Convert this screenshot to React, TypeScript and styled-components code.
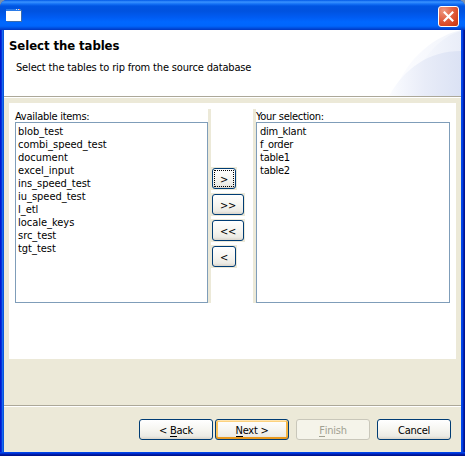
import React from "react";
import styled, { createGlobalStyle, css } from "styled-components";

const GlobalStyle = createGlobalStyle`
  * { box-sizing: border-box; }
  body { margin: 0; background: #7d90a8; overflow: hidden; }
`;

const Window = styled.div`
  width: 465px;
  height: 456px;
  display: flex;
  flex-direction: column;
  border-radius: 7px 7px 0 0;
  overflow: hidden;
  background: #0046e0;
  font: 11px/13px "DejaVu Sans Condensed", "DejaVu Sans", sans-serif;
  font-stretch: condensed;
  letter-spacing: -0.27px;
  color: #000;
  white-space: pre;
  cursor: default;
`;

const TitleBar = styled.header`
  height: 30px;
  flex: none;
  display: flex;
  justify-content: space-between;
  align-items: flex-start;
  padding: 6px 6px 0;
  background: linear-gradient(#0058e6 0, #3a93ff 2px, #1370f5 4px, #0055e2 6px, #0052df 11px, #005bf2 17px, #0068ff 22px, #0066fc 26px, #0050e0 28px, #0037c0 30px);
`;

const Frame = styled.div`
  flex: 1;
  display: flex;
  flex-direction: column;
  padding: 0 4px 4px;
  background:
    linear-gradient(#0044e8 0 1px, #0030d0 1px 2px, #001ca8 2px 3px, #00138c 3px) bottom / 100% 4px no-repeat,
    linear-gradient(90deg, #0019cf 0 1px, #0831d9 1px 2px, #166aee 2px 3px, #0855dd 3px 4px, transparent 4px calc(100% - 4px), #0048ee calc(100% - 4px) calc(100% - 3px), #0040e0 calc(100% - 3px) calc(100% - 2px), #0020b4 calc(100% - 2px) calc(100% - 1px), #001590 calc(100% - 1px));
`;

const Banner = styled.section`
  height: 67px;
  flex: none;
  display: flex;
  justify-content: space-between;
  background: #fff;
  border-bottom: 1px solid #aca899;
`;

const BannerText = styled.div`
  padding: 8px 0 0 5px;
`;

const Heading = styled.h1`
  margin: 0;
  font: bold 13px/15px "DejaVu Sans Condensed", "DejaVu Sans", sans-serif;
  font-stretch: condensed;
  letter-spacing: -0.07px;
`;

const Description = styled.p`
  margin: 8px 0 0 7px;
  letter-spacing: -0.16px;
`;

const Body = styled.main`
  flex: 1;
  padding: 5px 5px 0;
  background: #ece9d8;
  border-top: 1px solid #fff;
`;

const Panel = styled.div`
  height: 256px;
  display: flex;
  align-items: flex-start;
  padding: 6px 6px 0;
  background: #fff;
`;

const Column = styled.section`
  width: ${(p: { $width: number }) => p.$width}px;
  height: 194px;
  display: flex;
  flex-direction: column;
`;

const Label = styled.label`
  height: 13px;
  line-height: 15px;
`;

const List = styled.ul<{ $inset: number; $spacing: number }>`
  flex: 1;
  margin: 0;
  padding: 2px 2px 0 ${(p) => p.$inset}px;
  list-style: none;
  letter-spacing: ${(p) => p.$spacing}px;
  border: 1px solid #7f9db9;
`;

const Item = styled.li`
  height: 13px;
`;

const Transfer = styled.div`
  width: 48px;
  height: 194px;
  display: flex;
  flex-direction: column;
  align-items: flex-start;
  gap: 3px;
  padding-top: 58px;
  border: solid #ece9d8;
  border-width: 0 3px;
`;

const ButtonWell = styled.div`
  padding: 1px;
  background: #ece9d8;
`;

const Button = styled.button<{ $width: number; $focus?: boolean; $primary?: boolean }>`
  width: ${(p) => p.$width}px;
  height: 21px;
  padding: 1px 0 0;
  display: flex;
  align-items: center;
  justify-content: center;
  border: 1px solid #003c74;
  border-radius: 3px;
  background: linear-gradient(#fff, #f5f4ef 55%, #ecebe5 85%, #d9d4ca);
  color: #000;
  font: inherit;
  font-stretch: condensed;
  letter-spacing: inherit;
  white-space: pre;
  ${(p) => p.$focus && css`
    outline: 1px dotted #000;
    outline-offset: -3px;
  `}
  ${(p) => p.$primary && css`
    box-shadow: inset 0 1px #ffe5b0, inset 0 -2px #e99a20, inset 2px 0 #f9c35d, inset -2px 0 #f5b645, inset 0 2px #fcd27f;
  `}
  &:disabled {
    border-color: #c9c7ba;
    background: #f5f4ea;
    color: #a1a192;
  }
`;

const Footer = styled.footer`
  height: 47px;
  flex: none;
  display: flex;
  align-items: flex-start;
  padding: 13px 10px 0 135px;
  background: #ece9d8;
  border-top: 1px solid #aca899;
  box-shadow: inset 0 1px #fff;
`;

const Gap = styled.span`
  width: ${(p: { $size: number }) => p.$size}px;
`;

const Access = styled.span`
  display: inline-block;
  border-bottom: 1px solid currentColor;
  line-height: 10px;
`;

const CloseButton = styled.button`
  width: 21px;
  height: 21px;
  padding: 0;
  border: 1px solid #fff;
  border-radius: 3px;
  background: radial-gradient(circle at 25% 20%, #ee9880, #e26446 40%, #d64420 75%, #bf3510);
  svg { display: block; }
`;

const available = ["blob_test", "combi_speed_test", "document", "excel_input", "ins_speed_test", "iu_speed_test", "l_etl", "locale_keys", "src_test", "tgt_test"];
const selected = ["dim_klant", "f_order", "table1", "table2"];

function WindowIcon() {
  return (
    <svg width="16" height="16" shapeRendering="crispEdges">
      <path d="M1 15.5H15.5V4" fill="none" stroke="#3c6cab" />
      <path d="M0 4H15V15H0z" fill="#fff" />
      <path d="M0 3H15V5H0z" fill="#2b7be8" />
      <path d="M10 3h1v1h-1zM12 3h1v1h-1z" fill="#cfe3ff" />
      <path d="M13 3h1v1h-1z" fill="#e77852" />
    </svg>
  );
}

function BannerArt() {
  return (
    <svg width="76" height="66">
      <defs>
        <linearGradient id="outer" x1="0" x2="1">
          <stop offset="0" stopColor="#fdfdff" />
          <stop offset="1" stopColor="#f1f4fb" />
        </linearGradient>
        <linearGradient id="middle" x1="0" x2="1">
          <stop offset="0" stopColor="#f6f8fd" />
          <stop offset="1" stopColor="#e9edf8" />
        </linearGradient>
        <linearGradient id="inner" x1="0" x2="1">
          <stop offset="0" stopColor="#fbfcff" />
          <stop offset="0.5" stopColor="#e8ecf8" />
          <stop offset="1" stopColor="#dbe2f4" />
        </linearGradient>
      </defs>
      <path d="M8 66C18 35 43 8 76 0V66z" fill="url(#outer)" />
      <path d="M36 34C47 18 60 5 76 1V66H36z" fill="url(#middle)" />
      <path d="M4 66C19 39 43 21 76 21V66z" fill="url(#inner)" />
    </svg>
  );
}

export default function App() {
  return (
    <>
      <GlobalStyle />
      <Window>
        <TitleBar>
          <WindowIcon />
          <CloseButton aria-label="Close">
            <svg width="19" height="19">
              <path d="M4.8 4.8L14.2 14.2M14.2 4.8L4.8 14.2" stroke="#fff" strokeWidth="2.2" />
            </svg>
          </CloseButton>
        </TitleBar>
        <Frame>
          <Banner>
            <BannerText>
              <Heading>Select the tables</Heading>
              <Description>Select the tables to rip from the source database</Description>
            </BannerText>
            <BannerArt />
          </Banner>
          <Body>
            <Panel>
              <Column $width={193}>
                <Label>Available items:</Label>
                <List $inset={2} $spacing={-0.02}>{available.map((name) => <Item key={name}>{name}</Item>)}</List>
              </Column>
              <Transfer>
                <ButtonWell><Button $width={24} $focus>&gt;</Button></ButtonWell>
                <ButtonWell><Button $width={32}>&gt;&gt;</Button></ButtonWell>
                <ButtonWell><Button $width={32}>&lt;&lt;</Button></ButtonWell>
                <ButtonWell><Button $width={24}>&lt;</Button></ButtonWell>
              </Transfer>
              <Column $width={194}>
                <Label>Your selection:</Label>
                <List $inset={3} $spacing={-0.25}>{selected.map((name) => <Item key={name}>{name}</Item>)}</List>
              </Column>
            </Panel>
          </Body>
          <Footer>
            <Button $width={74}><span>&lt; <Access>B</Access>ack</span></Button>
            <Gap $size={2} />
            <Button $width={74} $primary><span><Access>N</Access>ext &gt;</span></Button>
            <Gap $size={7} />
            <Button $width={74} disabled><span><Access>F</Access>inish</span></Button>
            <Gap $size={7} />
            <Button $width={74}>Cancel</Button>
          </Footer>
        </Frame>
      </Window>
    </>
  );
}
